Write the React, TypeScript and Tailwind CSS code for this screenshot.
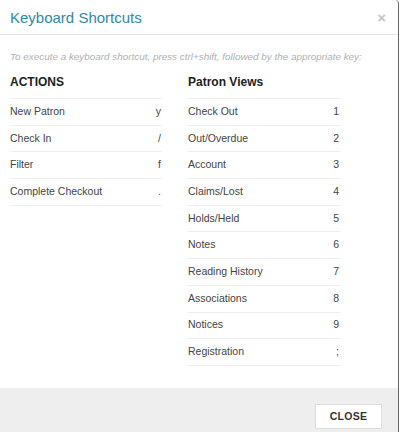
import React from 'react';

const actions: [string, string][] = [
  ['New Patron', 'y'],
  ['Check In', '/'],
  ['Filter', 'f'],
  ['Complete Checkout', '.'],
];

const patronViews: [string, string][] = [
  ['Check Out', '1'],
  ['Out/Overdue', '2'],
  ['Account', '3'],
  ['Claims/Lost', '4'],
  ['Holds/Held', '5'],
  ['Notes', '6'],
  ['Reading History', '7'],
  ['Associations', '8'],
  ['Notices', '9'],
  ['Registration', ';'],
];

const ShortcutList: React.FC<{ title: string; items: [string, string][] }> = ({ title, items }) => (
  <div className="w-[152px]">
    <h4 className="text-[12px] font-bold text-[#222] h-[30px] leading-[28px]">{title}</h4>
    <div className="border-b border-[#eeeeee]">
      {items.map(([label, key]) => (
        <div
          key={label}
          className="flex items-center justify-between h-[26.7px] border-t border-[#eeeeee] text-[10.5px] text-[#444]"
        >
          <span>{label}</span>
          <span className="pr-[1px]">{key}</span>
        </div>
      ))}
    </div>
  </div>
);

export default function App() {
  return (
    <div className="w-[400px] h-[432px] bg-white overflow-hidden font-['Liberation_Sans',Arial,sans-serif]">
      <div className="w-[399px] h-[432px] flex flex-col bg-white border-r border-[#666] rounded-tr-[4px]">
        {/* header */}
        <div className="flex items-center justify-between h-[35px] pl-[10px] pr-[12px] border-b border-[#e5e5e5]">
          <h3 className="text-[15px] text-[#2f8aa6] leading-none">Keyboard Shortcuts</h3>
          <button type="button" className="text-[15px] font-bold text-[#c4c4c4] leading-none">
            ×
          </button>
        </div>

        {/* body */}
        <div className="flex-1 px-[10px] pt-[15px]">
          <p className="text-[9.9px] italic text-[#b0b0b0] leading-[14px]">
            To execute a keyboard shortcut, press ctrl+shift, followed by the appropriate key:
          </p>
          <div className="flex gap-[26px] mt-[4px]">
            <ShortcutList title="ACTIONS" items={actions} />
            <ShortcutList title="Patron Views" items={patronViews} />
          </div>
        </div>

        {/* footer */}
        <div className="h-[44px] bg-[#eeeeee] flex justify-end items-start pt-[16px] pr-[16px]">
          <button
            type="button"
            className="w-[67px] h-[25px] bg-white border border-[#dddddd] text-[10.5px] font-bold text-[#333] tracking-[0.3px]"
          >
            CLOSE
          </button>
        </div>
      </div>
    </div>
  );
}
